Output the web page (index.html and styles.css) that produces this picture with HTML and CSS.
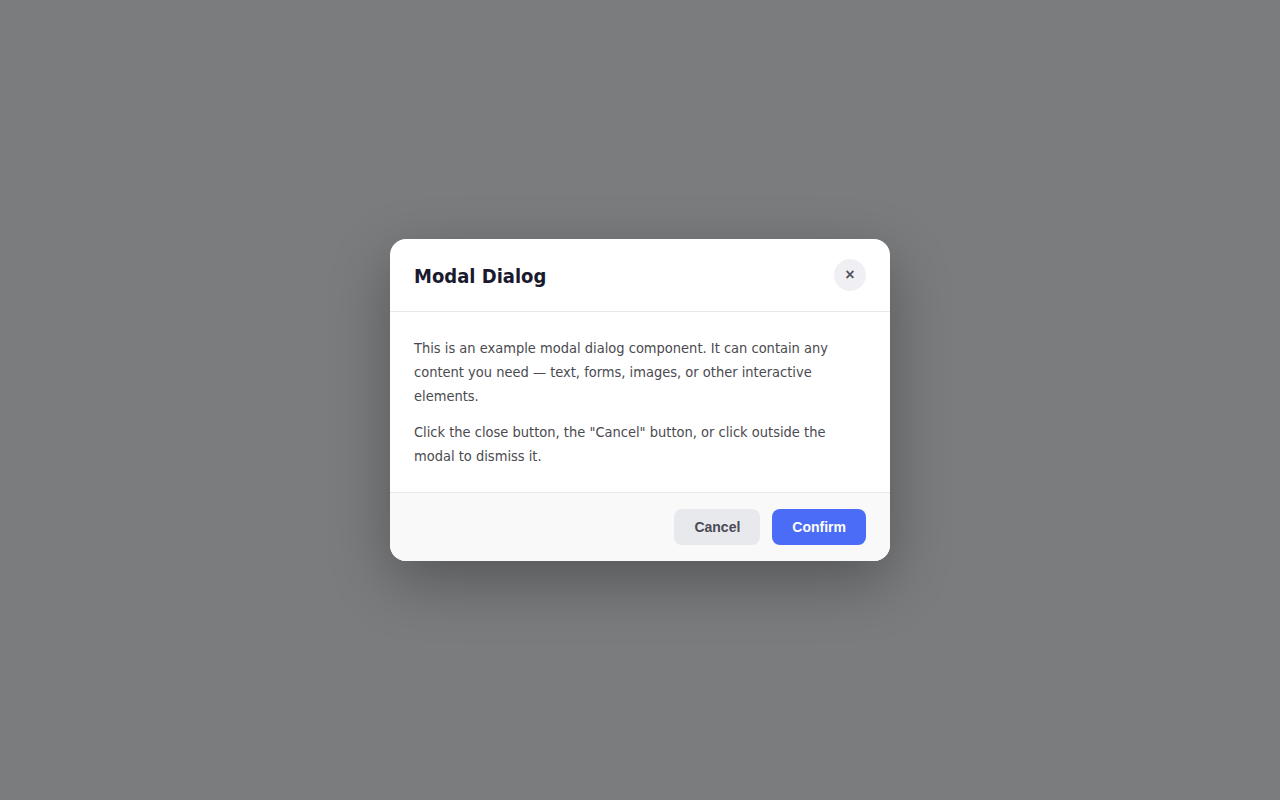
FILE: index.html
```html
<!DOCTYPE html>
<html lang="en">
<head>
<meta charset="utf-8">
<title>Modal Dialog</title>
<link rel="stylesheet" href="styles.css">
</head>
<body>
<div class="overlay">
  <div class="modal" role="dialog" aria-labelledby="modal-title">
    <div class="modal-header">
      <h2 id="modal-title" class="modal-title">Modal Dialog</h2>
      <button class="close-btn" aria-label="Close">&times;</button>
    </div>
    <div class="modal-body">
      <p>This is an example modal dialog component. It can contain any content you need — text, forms, images, or other interactive elements.</p>
      <p>Click the close button, the "Cancel" button, or click outside the modal to dismiss it.</p>
    </div>
    <div class="modal-footer">
      <button class="btn btn-secondary">Cancel</button>
      <button class="btn btn-primary">Confirm</button>
    </div>
  </div>
</div>
</body>
</html>
```
FILE: styles.css
```css
* { box-sizing: border-box; }
html, body { margin: 0; height: 100%; }
body {
  font-family: "DejaVu Sans Condensed", "DejaVu Sans", sans-serif;
  background: #f5f5f5;
}
.overlay {
  height: 100vh;
  background: #7b7c7e;
  display: flex;
  align-items: center;
  justify-content: center;
}
.modal {
  width: 500px;
  background: #fff;
  border-radius: 16px;
  overflow: hidden;
  box-shadow: 0 20px 60px rgba(0, 0, 0, 0.3);
}
.modal-header {
  display: flex;
  align-items: center;
  justify-content: space-between;
  padding: 20px 24px;
  border-bottom: 1px solid #e8e8ea;
}
.modal-title {
  margin: 0;
  padding-top: 2px;
  font-size: 20px;
  font-weight: bold;
  line-height: 30px;
  color: #1a1a2e;
}
.close-btn {
  width: 32px;
  height: 32px;
  border: none;
  border-radius: 50%;
  background: #f0f0f4;
  color: #55555f;
  font-family: "Liberation Sans", Arial, sans-serif;
  font-size: 16px;
  font-weight: bold;
  line-height: 1;
  padding: 0 0 1px;
  display: flex;
  align-items: center;
  justify-content: center;
}
.modal-body {
  padding: 24px;
  color: #4a4a4f;
  font-size: 14.5px;
  line-height: 24px;
}
.modal-body p { margin: 0 0 12px; }
.modal-body p:last-child { margin-bottom: 0; }
.modal-footer {
  display: flex;
  justify-content: flex-end;
  gap: 12px;
  padding: 16px 24px;
  background: #f9f9fa;
  border-top: 1px solid #e8e8ea;
}
.btn {
  height: 36px;
  border: none;
  border-radius: 8px;
  padding: 0 20px;
  font-family: "Liberation Sans", Arial, sans-serif;
  font-size: 14px;
  font-weight: bold;
}
.btn-secondary {
  background: #e8e9ed;
  color: #4a4a55;
}
.btn-primary {
  background: #4a6cf7;
  color: #fff;
}
```
